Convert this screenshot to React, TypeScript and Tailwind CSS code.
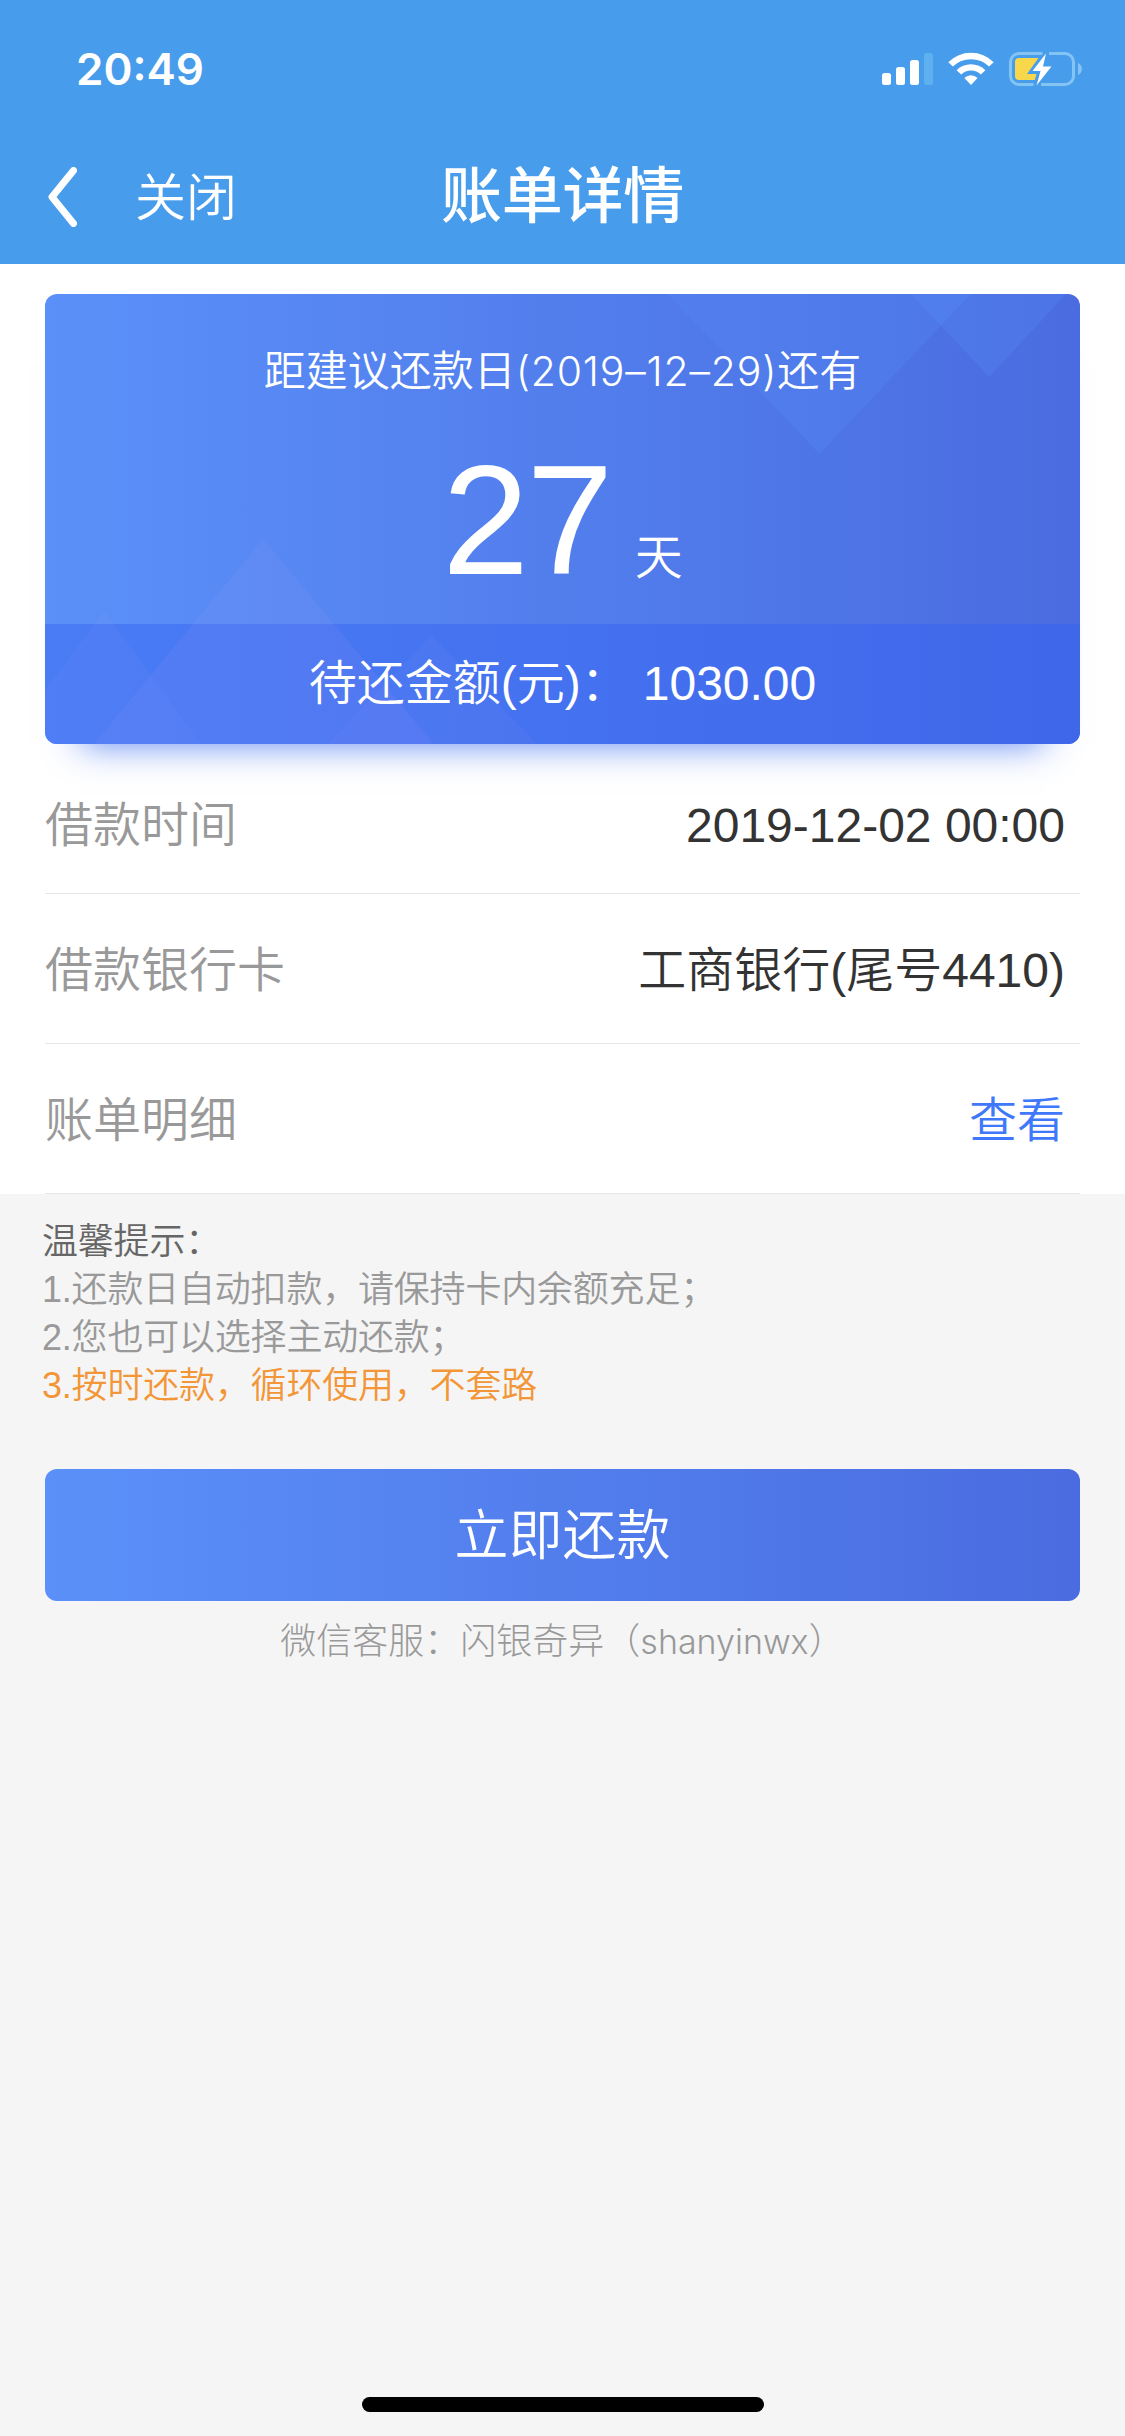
import React from "react";

const SANS = "font-['Liberation_Sans','Noto_Sans_CJK_SC',sans-serif]";

function StatusIcons() {
  return (
    <svg className="block h-9 w-[202px]" viewBox="882 51 202 36" fill="none">
      <rect x="882" y="73" width="9" height="12" rx="2.5" fill="#fff" />
      <rect x="896" y="67" width="9" height="18" rx="2.5" fill="#fff" />
      <rect x="910" y="60" width="9" height="25" rx="2.5" fill="#fff" />
      <rect x="924" y="53" width="9" height="32" rx="2.5" fill="#5fb0ee" />
      <path d="M948.3 62.2a32 32 0 0 1 45.4 0l-4.6 4.4a25.8 25.8 0 0 0-36.2 0z" fill="#fff" />
      <path d="M956.6 70.2a20.6 20.6 0 0 1 28.8 0l-4.6 4.4a14 14 0 0 0-19.6 0z" fill="#fff" />
      <path d="M964.4 78a9.4 9.4 0 0 1 13.2 0L971 85z" fill="#fff" />
      <path d="M1042.5 53.5H1019a8.5 8.5 0 0 0-8.5 8.5V76a8.5 8.5 0 0 0 8.5 8.5h14.6" stroke="#84c4f3" strokeWidth="3" />
      <path d="M1049 53.5H1065a8.5 8.5 0 0 1 8.5 8.5V76a8.5 8.5 0 0 1-8.5 8.5h-24" stroke="#84c4f3" strokeWidth="3" />
      <path d="M1078 63c5.2 2.2 5.2 9.8 0 12z" fill="#84c4f3" />
      <path d="M1038.5 58H1019a4 4 0 0 0-4 4v14a4 4 0 0 0 4 4h15.8l1.7-6H1027z" fill="#f8d74a" />
      <path d="M1046 53.5 1032.5 71h8l-4 14.5 15-19h-8.5z" fill="#fff" />
    </svg>
  );
}

function Header() {
  return (
    <header className="h-[264px] bg-[#479ceb] text-white">
      <div className="flex h-[138px] items-center justify-between pl-[76px] pr-[41px]">
        <span className="font-['Inter',sans-serif] text-[44px] font-semibold leading-none">20:49</span>
        <StatusIcons />
      </div>
      <div className="grid h-[118px] grid-cols-3 items-center">
        <div className="flex items-center pl-12">
          <svg className="h-[60px] w-[29px]" viewBox="0 0 29 60" fill="none">
            <path d="M25.5 3.5 4 30 25.5 56.5" stroke="#fff" strokeWidth="7" strokeLinecap="round" strokeLinejoin="round" />
          </svg>
          <span className="ml-[58px] pt-[3px] text-[51px] font-[350] leading-none">关闭</span>
        </div>
        <h1 className="whitespace-nowrap text-center text-[61px] font-medium leading-none tracking-[-0.3px]">
          账单详情
        </h1>
      </div>
    </header>
  );
}

function CardPattern() {
  return (
    <svg className="absolute inset-0 h-full w-full" viewBox="45 294 1035 450">
      <g fill="#d8b0ff">
        <path d="M263 539 94 744H434z" fillOpacity=".07" />
        <path d="M104 611 6 744H201z" fillOpacity=".045" />
        <path d="M431 635 328 744H537z" fillOpacity=".045" />
      </g>
      <g fill="#5c94ff" fillOpacity=".2">
        <path d="M819.5 454 668 294H971z" />
        <path d="M989.5 377 911 294H1066z" />
      </g>
    </svg>
  );
}

function SummaryCard() {
  return (
    <section className="h-[450px] rounded-xl bg-white shadow-[0_36px_34px_-36px_rgba(64,112,240,0.85)]">
      <div className="relative flex h-full flex-col overflow-hidden rounded-xl bg-linear-to-r from-[#5b90f9] to-[#4a6ce0] text-white">
        <div className="relative z-10 h-[330px]">
          <p className="pt-[47px] text-center text-[42px] font-[350] leading-[60px]">
            距建议还款日
            <span className="font-['Inter',sans-serif] text-[41px] font-light tracking-[0.8px]">(2019–12–29)</span>
            还有
          </p>
          <div className="mt-[33px] flex items-baseline justify-center leading-[170px]">
            <span className="text-[156px] tracking-[-2.5px]">27</span>
            <span className="ml-[24px] text-[48px] font-[350]">天</span>
          </div>
        </div>
        <div className="flex h-[120px] items-center justify-center gap-[14px] bg-linear-to-r from-[#4a7cf6] to-[#3f67e9] text-5xl font-[350]">
          <span className="relative z-10">待还金额(元)：</span>
          <span className="relative z-10">1030.00</span>
        </div>
        <CardPattern />
      </div>
    </section>
  );
}

type RowProps = { label: string; value: string; className?: string; valueClass?: string };

function Row({ label, value, className = "pt-1", valueClass = "text-[#333]" }: RowProps) {
  return (
    <div className={`flex h-[150px] items-center justify-between border-b border-[#e6e6e6] pr-[15px] text-5xl font-[350] ${className}`}>
      <span className="text-[#999]">{label}</span>
      <span className={valueClass}>{value}</span>
    </div>
  );
}

export default function App() {
  return (
    <div className={`flex h-[2436px] w-[1125px] flex-col bg-[#f5f5f5] ${SANS}`}>
      <Header />
      <main className="flex flex-col">
        <div className="h-[930px] bg-white px-[45px] pt-[30px]">
          <SummaryCard />
          <Row label="借款时间" value="2019-12-02 00:00" className="pt-[14px]" />
          <Row label="借款银行卡" value="工商银行(尾号4410)" />
          <Row label="账单明细" value="查看" valueClass="text-[#3f78fa]" />
        </div>
        <div className="px-[42px] pt-6 text-4xl font-[350] leading-[48px] tracking-[-0.2px] text-[#999]">
          <p className="text-[#666]">温馨提示：</p>
          <p>1.还款日自动扣款，请保持卡内余额充足；</p>
          <p>2.您也可以选择主动还款；</p>
          <p className="text-[#f29637]">3.按时还款，循环使用，不套路</p>
        </div>
        <button className="mx-[45px] mt-[59px] h-[132px] rounded-xl bg-linear-to-r from-[#5b90f9] to-[#4a6ce0] pt-[2px] text-[54px] font-[350] leading-none text-white">
          立即还款
        </button>
        <p className="mt-[17px] text-center text-4xl font-light leading-[48px] text-[#999]">
          微信客服：闪银奇异（<span className="font-['Inter',sans-serif] text-[34px]">shanyinwx</span>）
        </p>
      </main>
      <div className="mx-auto mb-6 mt-auto h-[15px] w-[402px] rounded-full bg-black" />
    </div>
  );
}
